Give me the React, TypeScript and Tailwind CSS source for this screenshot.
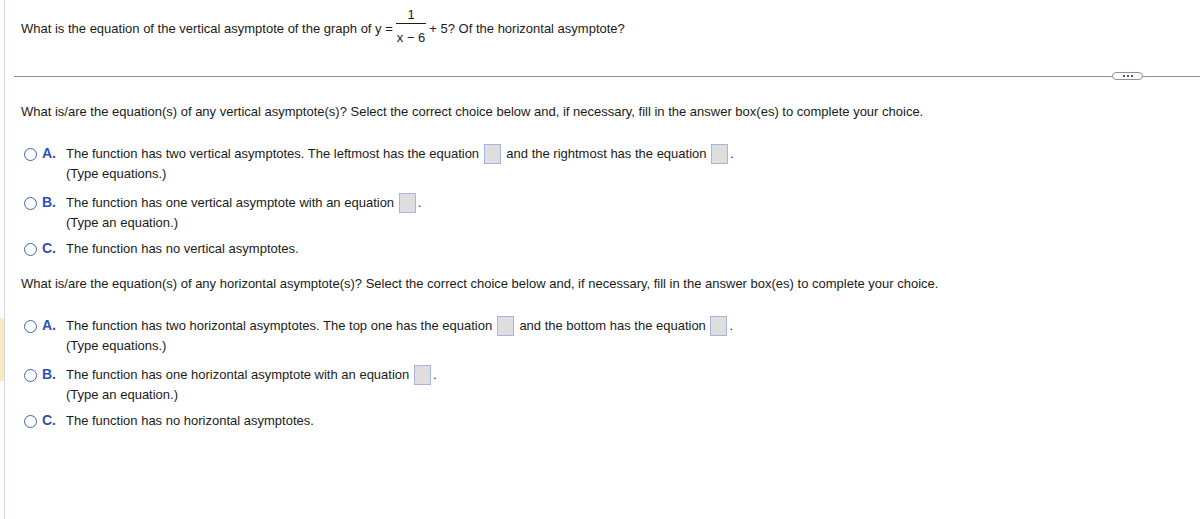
import React from 'react';

function Box() {
  return <span className="inline-block align-middle w-[17px] h-[20px] ml-[1px] mr-[2px] -mt-[2px] bg-[#dedede] border border-[#a3b5e0]" />;
}

function Radio() {
  return <span className="inline-block w-[13px] h-[13px] rounded-full border-[1.5px] border-[#3f62c9] bg-white" />;
}

function Option({ letter, children, hint, className }: { letter: string; children: React.ReactNode; hint?: string; className?: string }) {
  return (
    <div className={'flex items-start ' + (className ?? '')}>
      <div className="flex items-center w-[45px] pl-[3px] h-[20px] shrink-0">
        <Radio />
        <span className="ml-[5px] -mt-[2px] text-[14px] font-bold text-[#2f4fb8]">{letter}</span>
      </div>
      <div>
        <div className="h-[20px] leading-[20px] whitespace-nowrap">{children}</div>
        {hint && <div className="leading-[19px]">{hint}</div>}
      </div>
    </div>
  );
}

export default function App() {
  return (
    <div className="relative w-[1200px] h-[519px] bg-white text-[13px] text-[#1b1b1b] font-['Liberation_Sans',Arial,sans-serif] overflow-hidden">
      <div className="absolute left-[4px] top-0 bottom-0 w-px bg-[#d3d7e2]" />
      <div className="absolute left-0 top-[318px] w-[4px] h-[63px] bg-[#fbeac0]" />

      <div className="pl-[21px] pt-[8px] flex items-start">
        <span className="mt-[13px] leading-[16px]">What is the equation of the vertical asymptote of the graph of y =</span>
        <span className="inline-flex flex-col items-center ml-[3px] mr-[3px]">
          <span className="px-px leading-[14px] pb-px">1</span>
          <span className="border-t border-[#1b1b1b] px-px pt-[7px] leading-[14px]">x − 6</span>
        </span>
        <span className="mt-[13px] leading-[16px]">+ 5? Of the horizontal asymptote?</span>
      </div>

      <div className="ml-[14px] mt-[27px] flex items-center h-[8px]">
        <div className="flex-1 h-px bg-[#8b94a2]" />
        <div className="w-[31px] h-[8px] rounded-full border border-[#8b94a2] flex items-center justify-center gap-[2px]">
          <span className="w-[2px] h-[2px] bg-[#555]" />
          <span className="w-[2px] h-[2px] bg-[#555]" />
          <span className="w-[2px] h-[2px] bg-[#555]" />
        </div>
        <div className="w-[57px] h-px bg-[#8b94a2]" />
      </div>

      <div className="pl-[21px]">
        <div className="mt-[22px] leading-[20px]">
          What is/are the equation(s) of any vertical asymptote(s)? Select the correct choice below and, if necessary, fill in the answer box(es) to complete your choice.
        </div>
        <div className="mt-[22px] flex flex-col">
          <Option letter="A." hint="(Type equations.)">
            The function has two vertical asymptotes. The leftmost has the equation <Box /> and the rightmost has the equation <Box />.
          </Option>
          <Option letter="B." hint="(Type an equation.)" className="mt-[10px]">
            The function has one vertical asymptote with an equation <Box />.
          </Option>
          <Option letter="C." className="mt-[7px]">The function has no vertical asymptotes.</Option>
        </div>

        <div className="mt-[15px] leading-[20px]">
          What is/are the equation(s) of any horizontal asymptote(s)? Select the correct choice below and, if necessary, fill in the answer box(es) to complete your choice.
        </div>
        <div className="mt-[22px] flex flex-col">
          <Option letter="A." hint="(Type equations.)">
            The function has two horizontal asymptotes. The top one has the equation <Box /> and the bottom has the equation <Box />.
          </Option>
          <Option letter="B." hint="(Type an equation.)" className="mt-[10px]">
            The function has one horizontal asymptote with an equation <Box />.
          </Option>
          <Option letter="C." className="mt-[7px]">The function has no horizontal asymptotes.</Option>
        </div>
      </div>
    </div>
  );
}
